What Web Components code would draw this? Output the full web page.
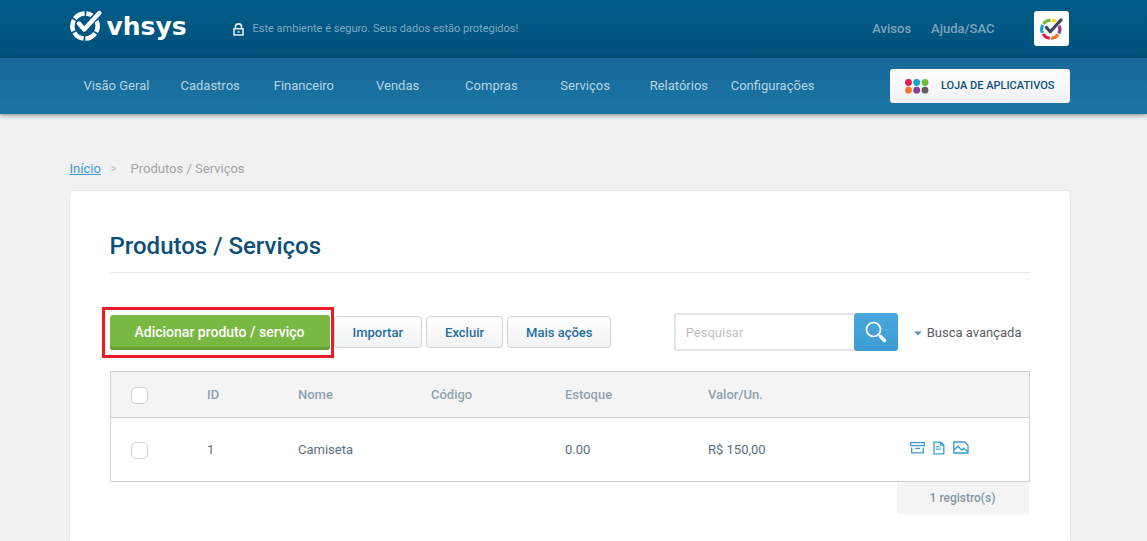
<!DOCTYPE html>
<html lang="pt-BR">
<head>
<meta charset="utf-8">
<meta name="viewport" content="width=device-width">
<title>Produtos / Serviços</title>
<style>
html{background:#f0f1f3}
body{margin:0;font:13px/20px Roboto,sans-serif;color:#5f6f7c}
</style>
</head>
<body>
<vh-app></vh-app>
<script>
const define = (name, css, html) => customElements.define(name, class extends HTMLElement {
  constructor() {
    super();
    const t = document.createElement('template');
    t.innerHTML = `<style>*{box-sizing:border-box}${css}</style>${html}`;
    this.attachShadow({mode: 'open'}).append(t.content.cloneNode(true));
  }
});

/* centred page column */
define('vh-container', `
:host{display:block;padding-right:8px}
div{max-width:1000px;margin:0 auto}`, `<div><slot></slot></div>`);

/* ring of six segments with a tick */
define('vh-mark', `
:host{display:block;width:32px;height:32px}
svg{display:block;width:100%;height:100%}`, `
<svg viewBox="0 0 32 32" fill="none" aria-hidden="true">
<g stroke-width="4.500">
${[1, 2, 3, 4, 5, 6].map(n => `<path stroke="var(--c${n},#fff)" transform="rotate(${(n - 1) * 60 + 2} 15 17)" d="M15.900 4.400A12.600 12.600 0 0 1 25.500 10"/>`).join('')}
</g>
<path stroke="var(--gap,#005785)" stroke-width="7" d="M14 20L31 2"/>
<path stroke="var(--gap,#005785)" stroke-width="6" d="M7 12.500l7 7.500"/>
<path stroke="var(--tick,#fff)" stroke-width="4.400" stroke-linejoin="round" stroke-linecap="round" d="M9 14.500l5.200 6L29.300 4"/>
</svg>`);

define('vh-topbar', `
:host{display:block;background:linear-gradient(#005b89,#00527c)}
.row{display:flex;align-items:center;height:58px}
.logo{display:flex;align-items:center;gap:5px;width:163px;color:#fff;text-decoration:none;font:bold 25px/32px "DejaVu Sans",sans-serif;padding-bottom:8px}
.logo span{padding-top:4px}
.safe{display:flex;align-items:center;gap:9px;font-size:11px;color:#7fa9c1}
.links{display:flex;gap:20px;margin-left:auto;margin-right:39px}
.links a{color:#7fa4bb;font-weight:500;text-decoration:none}
.user{display:grid;place-items:center;width:35px;height:35px;margin:0 1px 2px 0;border:0;border-radius:3px;padding:0;background:#fff}
.user vh-mark{width:23px;height:23px;--c1:#ffd91e;--c2:#8b3c96;--c3:#f5752b;--c4:#e31b4c;--c5:#10a7c5;--c6:#79b943;--gap:#fff;--tick:#3b4560}
`, `
<vh-container><div class="row">
<a class="logo" href="#"><vh-mark></vh-mark><span>vhsys</span></a>
<div class="safe"><svg width="11" height="13" viewBox="0 0 11 13" fill="none" stroke="#e2edf3" stroke-width="1.600" aria-hidden="true"><path d="M2.500 6V3.500a3 2.600 0 0 1 6 0V6M1 5.800h9v6.200H1z"/><path d="M4.500 8.900h2"/></svg><span>Este ambiente é seguro. Seus dados estão protegidos!</span></div>
<nav class="links"><a href="#">Avisos</a><a href="#">Ajuda/SAC</a></nav>
<button class="user" aria-label="Conta"><vh-mark></vh-mark></button>
</div></vh-container>`);

define('vh-nav', `
:host{display:block;position:relative;background:linear-gradient(#176898,#1b76a5);box-shadow:0 1px 5px #0007}
.row{display:flex;align-items:center;justify-content:space-between;height:56px}
nav{display:flex;flex:0 1 750px}
nav a{flex:1 1 0;min-width:0;text-align:center;color:#b8d3e2;text-decoration:none}
button{display:flex;align-items:center;gap:12px;height:34px;padding:0 15px;border:0;border-radius:3px;background:linear-gradient(#fff,#f0f1f4);font:500 11px/20px Roboto,sans-serif;color:#0c5079;white-space:nowrap}
`, `
<vh-container><div class="row">
<nav><a href="#">Visão Geral</a><a href="#">Cadastros</a><a href="#">Financeiro</a><a href="#">Vendas</a><a href="#">Compras</a><a href="#">Serviços</a><a href="#">Relatórios</a><a href="#">Configurações</a></nav>
<button><svg width="24" height="15" viewBox="0 0 24 15" aria-hidden="true"><circle cx="3.500" cy="3.500" r="3.400" fill="#e31b4c"/><circle cx="11.700" cy="3.500" r="3.400" fill="#10a7c5"/><circle cx="20" cy="3.500" r="3.400" fill="#79b943"/><circle cx="3.500" cy="11.200" r="3.400" fill="#f5752b"/><circle cx="11.700" cy="11.200" r="3.400" fill="#8b3c96"/><circle cx="20" cy="11.200" r="3.400" fill="#606060"/></svg>LOJA DE APLICATIVOS</button>
</div></vh-container>`);

define('vh-breadcrumb', `
:host{display:flex;padding:45px 0 12px;color:#a5a5a5}
a{color:#3a9ad5}
i{font-style:normal;font-size:11px;color:#bdbdbd;margin:0 14px 0 10px}
`, `<a href="#">Início</a><i>&gt;</i><span>Produtos / Serviços</span>`);

define('vh-button', `
:host{display:block}
button{display:block;height:32px;padding:2px 18px 0;border:1px solid #cdd1db;border-radius:4px;background:linear-gradient(#fff,#f1f2f4);color:#1f6f9f;font:500 13px/20px Roboto,sans-serif;white-space:nowrap}
:host([primary]) button{height:35px;padding:0 25px;border:0;box-shadow:inset 0 -3px #67a037;border-radius:3px;background:#79b943;color:#fff;font-size:14px}
`, `<button><slot></slot></button>`);

define('vh-search', `
:host{display:flex;align-items:center}
form{display:flex;height:38px}
input{width:180px;border:2px solid #e1e6ea;border-right:0;border-radius:3px 0 0 3px;padding:2px 10px 0;font:13px/20px Roboto,sans-serif;background:#fff;outline:0}
input::placeholder{color:#bfc1c4;opacity:1}
button{display:grid;place-items:center;width:44px;border:0;border-radius:3px;padding:0;background:linear-gradient(#48a8dc,#3e9cd5)}
a{display:flex;align-items:center;gap:5px;margin:0 8px 0 16px;padding-top:2px;color:#5d5d61;text-decoration:none}
`, `
<form><input type="text" placeholder="Pesquisar" aria-label="Pesquisar"><button type="button" aria-label="Buscar"><svg width="22" height="22" viewBox="0 0 22 22" fill="none" stroke="#fff" aria-hidden="true"><circle cx="8.500" cy="8.500" r="7" stroke-width="1.700"/><path d="M13.500 13.500l2 2" stroke-width="1.500"/><path d="M15.500 15.500l4 4" stroke-width="3.500" stroke-linecap="round"/></svg></button></form>
<a href="#"><svg width="8" height="5" viewBox="0 0 8 5" aria-hidden="true"><path d="M0 .5h8L4 4.500z" fill="#6494ad"/></svg>Busca avançada</a>`);

define('vh-toolbar', `
:host{display:flex;align-items:center;justify-content:space-between;height:38px}
.actions{display:flex;align-items:center;gap:4px}
.marked{position:relative}
.marked::after{content:"";position:absolute;inset:-8px -4px -8px -8px;border:3px solid #ed1c24;pointer-events:none;z-index:1}
`, `<div class="actions"><div class="marked"><vh-button primary>Adicionar produto / serviço</vh-button></div><vh-button>Importar</vh-button><vh-button>Excluir</vh-button><vh-button>Mais ações</vh-button></div><vh-search></vh-search>`);

define('vh-table', `
:host{display:block}
table{width:100%;border-collapse:collapse;table-layout:fixed;border:1px solid #d2d2d2}
th,td{text-align:left;padding:0}
th{height:46px;background:#f4f4f4;border-bottom:1px solid #d2d2d2;font-weight:500;color:#90a3b1}
td{height:64px;color:#5b707e}
th:first-child,td:first-child{padding-left:20px}
input{appearance:none;display:block;width:17px;height:17px;margin:2px 0 0;border:1px solid #d0d0d0;border-radius:5px;background:#fff}
.icons{display:flex;align-items:center;gap:8px;padding-bottom:4px}
.icons a{display:block}
svg{display:block;fill:none;stroke:#3a9ad5;stroke-width:1.300}
.count{width:132px;margin:0 1px 0 auto;background:#f4f4f4;font-size:12px;line-height:32px;font-weight:500;color:#8397a4;text-align:center}
`, `
<table>
<colgroup><col style="width:97px"><col style="width:91px"><col style="width:133px"><col style="width:134px"><col style="width:143px"><col style="width:202px"><col></colgroup>
<thead><tr><th><input type="checkbox" aria-label="Selecionar todos"></th><th>ID</th><th>Nome</th><th>Código</th><th>Estoque</th><th>Valor/Un.</th><th></th></tr></thead>
<tbody><tr><td><input type="checkbox" aria-label="Selecionar Camiseta"></td><td>1</td><td>Camiseta</td><td></td><td>0.00</td><td>R$ 150,00</td>
<td><div class="icons">
<a href="#" aria-label="Estoque"><svg width="15" height="13" viewBox="0 0 15 13"><path d="M.7 1.700h13.600v3H.7zM1.700 6.500v5.300h11.600V6.500M5 7.300h5"/></svg></a>
<a href="#" aria-label="Documento"><svg width="12" height="14" viewBox="0 0 12 14"><path d="M1 1.200h6.800L10.800 4v8.800H1zM7.500 1.200v3h3.300"/><path stroke-width="1" d="M3 5.500h3.500M3 7h5M3 8.500h5" opacity=".7"/></svg></a>
<a href="#" aria-label="Imagem"><svg width="16" height="13" viewBox="0 0 16 13"><path d="M.8 1h10.700l3.500 3.200V12H.8zM1.200 8.700L5 5.200l3.700 4 2-1.800L15 11"/></svg></a>
</div></td></tr></tbody>
</table>
<div class="count">1 registro(s)</div>`);

define('vh-card', `
:host{display:block;background:#fff;border-radius:4px 4px 0 0;box-shadow:0 0 2px #0002;padding:40px 40px 27px}
h1{margin:0 0 40px;padding-bottom:11px;border-bottom:1px solid #e6e6e6;font:500 24px/30px Roboto,sans-serif;color:#0c5079}
vh-table{margin-top:20px}
`, `<h1>Produtos / Serviços</h1><vh-toolbar></vh-toolbar><vh-table></vh-table>`);

define('vh-app', `:host{display:block}`, `
<header><vh-topbar></vh-topbar><vh-nav></vh-nav></header>
<main><vh-container><vh-breadcrumb></vh-breadcrumb><vh-card></vh-card></vh-container></main>`);
</script>
</body>
</html>
